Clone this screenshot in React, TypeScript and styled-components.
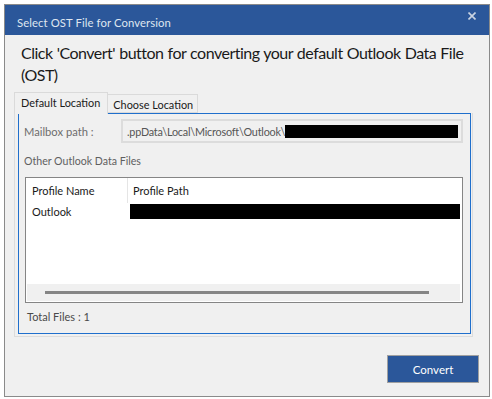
import React, { FC } from "react";
import styled, { createGlobalStyle } from "styled-components";

const GlobalStyle = createGlobalStyle`
  html, body {
    margin: 0;
    padding: 0;
    background: #ffffff;
  }
  body {
    font-family: Lato, "Noto Sans", sans-serif;
  }
`;

const App: FC = function () {
  return (
    <>
      <GlobalStyle />
      <Window>
        <TitleBar>
          <TitleText>Select OST File for Conversion</TitleText>
          <CloseButton>
            <svg width="8" height="8" viewBox="0 0 8 8">
              <path d="M0.5 0.5 L7.5 7.5 M7.5 0.5 L0.5 7.5" stroke="#c9d3e2" strokeWidth="1.6" />
            </svg>
          </CloseButton>
        </TitleBar>
        <Heading>
          Click 'Convert' button for converting your default Outlook Data File (OST)
        </Heading>
        <Tabs>
          <TabStrip>
            <Tab active>Default Location</Tab>
            <Tab>Choose Location</Tab>
          </TabStrip>
          <TabPage>
            <Panel>
              <PathRow>
                <MutedLabel>Mailbox path :</MutedLabel>
                <PathBox>
                  <PathText>.ppData\Local\Microsoft\Outlook\</PathText>
                  <Redacted />
                </PathBox>
              </PathRow>
              <SectionLabel>Other Outlook Data Files</SectionLabel>
              <ListBox>
                <ListHeader>
                  <NameCell>Profile Name</NameCell>
                  <PathCell header>Profile Path</PathCell>
                </ListHeader>
                <ListRow>
                  <NameCell>Outlook</NameCell>
                  <PathCell>
                    <RowRedacted />
                  </PathCell>
                </ListRow>
                <ListFill />
                <ScrollBar>
                  <ScrollThumb />
                </ScrollBar>
              </ListBox>
              <TotalFiles>Total Files : 1</TotalFiles>
            </Panel>
          </TabPage>
        </Tabs>
        <Footer>
          <ConvertButton>Convert</ConvertButton>
        </Footer>
      </Window>
    </>
  );
};

export default App;

const Window = styled.div`
  margin: 4px;
  width: 486px;
  height: 393px;
  box-sizing: border-box;
  border: 1px solid #8a8a8a;
  background: #f0f0f0;
  display: flex;
  flex-direction: column;
`;

const TitleBar = styled.div`
  height: 30px;
  background: #2b579a;
  display: flex;
  flex-direction: row;
  justify-content: space-between;
  align-items: flex-start;
  padding: 0 12px 0 12px;
`;

const TitleText = styled.div`
  color: #dfe6f0;
  font-size: 11.3px;
  margin-top: 11px;
  letter-spacing: 0.1px;
`;

const CloseButton = styled.div`
  margin-top: 7px;
  margin-right: 1px;
  display: flex;
`;

const Heading = styled.div`
  color: #1a1a1a;
  font-size: 16px;
  letter-spacing: -0.5px;
  word-spacing: 0.5px;
  line-height: 22px;
  padding: 7px 6px 0 16px;
  height: 50px;
`;

const Tabs = styled.div`
  margin-left: 9px;
  display: flex;
  flex-direction: column;
  width: 459px;
`;

const TabStrip = styled.div`
  display: flex;
  flex-direction: row;
  align-items: flex-end;
  height: 21px;
  position: relative;
  z-index: 1;
`;

const Tab = styled.div<{ active?: boolean }>`
  box-sizing: border-box;
  height: ${(p) => (p.active ? "22px" : "19px")};
  margin-bottom: ${(p) => (p.active ? "-1px" : "0")};
  padding: ${(p) => (p.active ? "3px 7px 0 6px" : "3px 4px 0 5px")};
  border: 1px solid #dadada;
  border-bottom: ${(p) => (p.active ? "none" : "1px solid #dadada")};
  border-left: ${(p) => (p.active ? "1px solid #dadada" : "none")};
  background: #f0f0f0;
  font-size: 10.9px;
  color: #1a1a1a;
  white-space: nowrap;
`;

const TabPage = styled.div`
  box-sizing: border-box;
  height: 224px;
  border: 1px solid #dcdcdc;
  border-top: none;
  padding: 0 1px 2px 3px;
  display: flex;
`;

const Panel = styled.div`
  flex: 1;
  box-sizing: border-box;
  border: 1px solid #1f6fcc;
  display: flex;
  flex-direction: column;
  padding: 5px 7px 0 5px;
`;

const PathRow = styled.div`
  display: flex;
  flex-direction: row;
  align-items: center;
  height: 24px;
`;

const MutedLabel = styled.div`
  color: #6d6d6d;
  font-size: 11.2px;
  width: 97px;
`;

const PathBox = styled.div`
  flex: 1;
  height: 24px;
  box-sizing: border-box;
  border: 2px solid #dcdcdc;
  background: #f0f0f0;
  display: flex;
  flex-direction: row;
  align-items: center;
  padding: 0 3px 0 4px;
  overflow: hidden;
`;

const PathText = styled.div`
  color: #555555;
  font-size: 10.8px;
  letter-spacing: -0.2px;
  white-space: nowrap;
`;

const Redacted = styled.div`
  flex: 1;
  height: 13px;
  background: #000000;
  margin-top: 1px;
`;

const SectionLabel = styled.div`
  color: #5f5f5f;
  font-size: 10.6px;
  margin-top: 5px;
  height: 26px;
  display: flex;
  align-items: center;
`;

const ListBox = styled.div`
  margin-top: 3px;
  margin-left: 1px;
  height: 126px;
  box-sizing: border-box;
  border: 1px solid #858585;
  background: #ffffff;
  display: flex;
  flex-direction: column;
  padding: 0 2px 0 0;
`;

const ListHeader = styled.div`
  display: flex;
  flex-direction: row;
  height: 25px;
  align-items: stretch;
`;

const ListRow = styled.div`
  display: flex;
  flex-direction: row;
  height: 17px;
  align-items: center;
`;

const NameCell = styled.div`
  width: 101px;
  padding-left: 6px;
  box-sizing: border-box;
  font-size: 11px;
  color: #1a1a1a;
  display: flex;
  align-items: center;
`;

const PathCell = styled.div<{ header?: boolean }>`
  flex: 1;
  display: flex;
  align-items: center;
  font-size: 11px;
  color: #1a1a1a;
  padding-left: ${(p) => (p.header ? "5px" : "3px")};
  border-left: ${(p) => (p.header ? "1px solid #e5e5e5" : "none")};
`;

const RowRedacted = styled.div`
  flex: 1;
  height: 15px;
  background: #000000;
`;

const ListFill = styled.div`
  flex: 1;
`;

const ScrollBar = styled.div`
  height: 17px;
  background: #f0f0f0;
  margin: 0 0 1px 1px;
  display: flex;
  align-items: center;
  padding-left: 18px;
`;

const ScrollThumb = styled.div`
  width: 384px;
  height: 3px;
  background: #858585;
`;

const TotalFiles = styled.div`
  color: #4a4a4a;
  font-size: 11px;
  margin-top: 7px;
  margin-left: 3px;
`;

const Footer = styled.div`
  flex: 1;
  display: flex;
  flex-direction: row;
  justify-content: flex-end;
  align-items: flex-end;
  padding: 0 10px 13px 0;
`;

const ConvertButton = styled.div`
  width: 92px;
  height: 28px;
  box-sizing: border-box;
  border: 1px solid #a0a0a0;
  background: #2b579a;
  color: #ffffff;
  font-size: 11.5px;
  display: flex;
  align-items: center;
  justify-content: center;
`;
